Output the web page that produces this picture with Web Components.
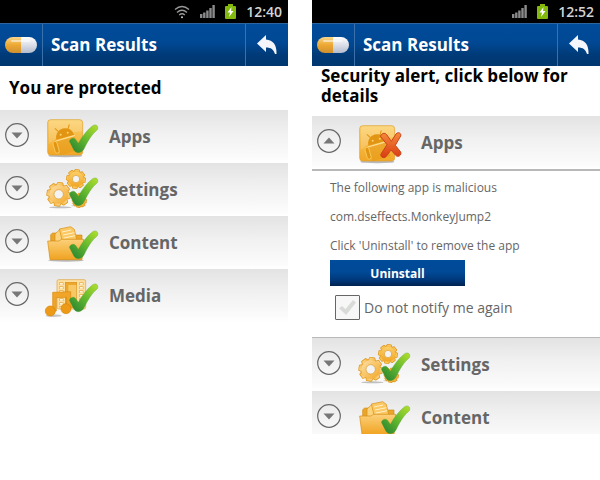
<!DOCTYPE html>
<html lang="en">
<head>
<meta charset="utf-8">
<meta name="viewport" content="width=device-width, initial-scale=1">
<title>Scan Results</title>
<style>
  body {
    margin: 0;
    background: #fff;
    color: #666;
    font-family: "Open Sans", "Noto Sans", sans-serif;
  }
  main {
    display: grid;
    grid-template-columns: 1fr 1fr;
    gap: 24px;
    align-items: start;
  }
  p {
    margin: 0;
    font-size: 12px;
    line-height: 29px;
  }
</style>
</head>
<body>
<main>
  <phone-screen time="12:40" wifi>
    <span slot="message">You are protected</span>
    <scan-row icon="apps" state="ok">Apps</scan-row>
    <scan-row icon="settings" state="ok">Settings</scan-row>
    <scan-row icon="content" state="ok">Content</scan-row>
    <scan-row icon="media" state="ok">Media</scan-row>
  </phone-screen>
  <phone-screen time="12:52" alert>
    <span slot="message">Security alert, click below for details</span>
    <scan-row icon="apps" state="bad" open>
      Apps
      <div slot="details">
        <p>The following app is malicious</p>
        <p>com.dseffects.MonkeyJump2</p>
        <p>Click 'Uninstall' to remove the app</p>
        <action-button>Uninstall</action-button>
        <tick-box>Do not notify me again</tick-box>
      </div>
    </scan-row>
    <scan-row icon="settings" state="ok">Settings</scan-row>
    <scan-row icon="content" state="ok" cut>Content</scan-row>
  </phone-screen>
</main>

<script>
const gear = (cx, cy, r, hole, fill) => {
  let teeth = '';
  for (let i = 0; i < 8; i++) {
    teeth += `<path d="M${-r * 0.3} ${-r * 0.7}L${-r * 0.2} ${-r}H${r * 0.2}L${r * 0.3} ${-r * 0.7}Z" transform="rotate(${i * 45 + 8})"/>`;
  }
  return `<g transform="translate(${cx} ${cy})" stroke-linejoin="round">
    <g fill="${fill}" stroke="#dc9418" stroke-width="5">${teeth}<circle r="${r * 0.8}"/></g>
    <g fill="${fill}" stroke="#f8bf55" stroke-width="1">${teeth}</g>
    <circle r="${r * 0.82}" fill="${fill}"/>
    <circle r="${hole}" fill="#f3f3f3" stroke="#d99a2c" stroke-width="2"/>
  </g>`;
};

const ICONS = {
  apps: `
    <ellipse cx="82" cy="131" rx="51" ry="5" fill="#777" opacity=".5"/>
    <rect x="29" y="23" width="105" height="106" rx="9" fill="url(#gold)" stroke="#e0a02e" stroke-width="2"/>
    <path d="M32 30q1-5 7-5h86q6 0 7 5v28Q75 60 32 96Z" fill="#fff" opacity=".18"/>
    <g transform="rotate(-16 80 70)" fill="#e29512">
      <path d="M52 76a28 27 0 0 1 56 0Z"/>
      <path d="M65 54l-7-11M95 54l7-11" stroke="#e29512" stroke-width="3" stroke-linecap="round"/>
      <path d="M52 82h56v42H52Z" opacity=".45"/>
      <path d="M51 79h58" stroke="#fde3a0" stroke-width="3"/>
      <circle cx="69" cy="65" r="3" fill="#fbd46e"/><circle cx="91" cy="65" r="3" fill="#fbd46e"/>
    </g>
    <rect x="48" y="88" width="12" height="36" rx="6" transform="rotate(-16 54 105)" fill="#e29512" stroke="#fbd46e" stroke-width="2"/>`,
  settings: `
    <ellipse cx="67" cy="127" rx="34" ry="3" fill="#777" opacity=".45"/>
    <ellipse cx="122" cy="122" rx="22" ry="3" fill="#777" opacity=".3"/>
    ${gear(124, 106, 20, 7, '#f5b33a')}
    ${gear(114, 42, 27, 11, 'url(#gold)')}
    ${gear(62, 88, 34, 14, 'url(#pale)')}`,
  content: `
    <ellipse cx="84" cy="127" rx="54" ry="4" fill="#777" opacity=".5"/>
    <g stroke="#d48c13" stroke-width="2" stroke-linejoin="round">
      <path d="M38 72V50l6-5h24l5 6h59v60H38Z" fill="#e9a62b"/>
      <path d="M51 48l15-14 28 2 17 42H51Z" fill="#fbd47d"/>
      <path d="M64 33l34-7 11 8 10 44H75Z" fill="#fbc862"/>
      <path d="M72 42l27-6M75 51l34-7M77 60l35-7" fill="none" stroke="#fff0c8" stroke-width="3"/>
      <path d="M29 69h34l7-5h67l-5 61H36Z" fill="url(#folder)"/>
    </g>`,
  media: `
    <ellipse cx="47" cy="134" rx="24" ry="4" fill="#777" opacity=".4"/>
    <rect x="57" y="26" width="86" height="88" rx="5" fill="#fde0a0" stroke="#dda13c" stroke-width="2"/>
    <rect x="82" y="34" width="34" height="76" fill="#eca82c" stroke="#d9901c" stroke-width="2"/>
    <path d="M91 42h24v60H91Z" fill="#f8c766"/>
    <path d="M70 34v76M130 34v76" stroke="#e3ab4c" stroke-width="13" stroke-dasharray="8 4"/>
    <path d="M70 36v74M130 36v74" stroke="#fff4d5" stroke-width="9" stroke-dasharray="5 7"/>
    <path d="M44 64l54-2v50H86V79l-31 1v40H44Z" fill="#f0a428" stroke="#d98b10" stroke-width="2"/>
    <circle cx="37" cy="120" r="15" fill="#ec9a17" stroke="#d78408" stroke-width="2"/>
    <circle cx="84" cy="113" r="15" fill="#ec9a17" stroke="#d78408" stroke-width="2"/>`
};

const MARKS = {
  ok: `<path d="M94 88c3-11 16-12 20-4l7 10c12-22 26-40 43-53 9-6 19 0 14 12-18 15-29 35-40 58-9 15-25 14-31 2Z" fill="url(#tick)" stroke="#4f9b2c"/>`,
  bad: `<path d="M92 56c0-9 12-14 18-6l14 20 14-22c7-8 17-2 14 6l-16 28 16 20c4 9-8 18-15 10l-14-16-15 20c-8 7-18 0-15-8l18-28Z" fill="url(#cross)" stroke="#c9441a" stroke-width="3"/>`
};

const DEFS = `
  <defs>
    <linearGradient id="gold" x2="0" y2="1"><stop stop-color="#fbcf68"/><stop offset="1" stop-color="#f2a625"/></linearGradient>
    <linearGradient id="pale" x2="1" y2="1"><stop stop-color="#fde1a8"/><stop offset="1" stop-color="#f3a827"/></linearGradient>
    <linearGradient id="folder" x2="0" y2="1"><stop stop-color="#fcd07a"/><stop offset="1" stop-color="#f0a320"/></linearGradient>
    <linearGradient id="tick" x1="1" x2="0" y2="1"><stop stop-color="#b4e02c"/><stop offset=".5" stop-color="#5fb62f"/><stop offset="1" stop-color="#227c31"/></linearGradient>
    <linearGradient id="cross" x2="0" y2="1"><stop stop-color="#f58a3c"/><stop offset="1" stop-color="#d93c12"/></linearGradient>
  </defs>`;

class StatusBar extends HTMLElement {
  constructor() {
    super();
    this.attachShadow({ mode: 'open' });
  }

  connectedCallback() {
    const wifi = this.hasAttribute('wifi') ? `
      <svg width="16" height="14" viewBox="0 0 16 14" fill="none" stroke="#999" stroke-width="1.4">
        <path d="M1 4.5Q8-1.5 15 4.5M3 7.5Q8 3 13 7.5M5.2 10Q8 7.5 10.8 10"/>
        <circle cx="8" cy="12.3" r="1" fill="#ccc" stroke="none"/>
      </svg>` : '';
    this.shadowRoot.innerHTML = `
      <style>
        :host {
          display: flex;
          align-items: center;
          justify-content: flex-end;
          gap: 10px;
          height: 23px;
          padding-right: 6px;
          background: #000;
          color: #d4d4d4;
          font-size: 14px;
          font-weight: 600;
        }
      </style>
      ${wifi}
      <svg width="15" height="14" viewBox="0 0 15 14" fill="#8b8b8b">
        <path d="M0 9h2.4v4H0zM3.1 7.5h2.4V13H3.1zM6.2 5.5h2.4V13H6.2zM9.3 3h2.4v10H9.3zM12.4 0h2.4v13h-2.4z"/>
      </svg>
      <svg width="11" height="15" viewBox="0 0 11 15">
        <path d="M3 0h5v2h2q1 0 1 1v11q0 1-1 1H1q-1 0-1-1V3q0-1 1-1h2Z" fill="#83b80e"/>
        <path d="M6.5 3L2.5 8.5H5L4 13L8.5 7H6Z" fill="#fff"/>
      </svg>
      <time>${this.getAttribute('time')}</time>
    `;
  }
}

class TitleBar extends HTMLElement {
  constructor() {
    super();
    this.attachShadow({ mode: 'open' });
    this.shadowRoot.innerHTML = `
      <style>
        :host {
          display: grid;
          grid-template-columns: 43px 1fr 43px;
          align-items: stretch;
          height: 43px;
          box-sizing: border-box;
          border-top: 1px solid #2f659f;
          background: linear-gradient(#004b9b, #004893 45%, #003a77 75%, #00376f);
          color: #fff;
        }
        .logo, button {
          display: grid;
          place-items: center;
          border: 0 solid #3b70ab;
        }
        .logo { border-right-width: 1px; }
        h1 {
          margin: 0;
          padding-left: 8px;
          font-size: 17px;
          line-height: 42px;
          white-space: nowrap;
        }
        button {
          padding: 0;
          border-left-width: 1px;
          background: none;
          cursor: pointer;
        }
      </style>
      <div class="logo">
        <svg width="32" height="16" viewBox="0 0 32 16">
          <defs>
            <linearGradient id="o" x2="0" y2="1"><stop stop-color="#f8d68c"/><stop offset=".5" stop-color="#eda832"/><stop offset="1" stop-color="#d09030"/></linearGradient>
            <linearGradient id="w" x2="0" y2="1"><stop stop-color="#fff"/><stop offset=".5" stop-color="#dcdfe8"/><stop offset="1" stop-color="#b4bccd"/></linearGradient>
          </defs>
          <path d="M16 0H8a8 8 0 0 0 0 16h8Z" fill="url(#o)"/>
          <path d="M16 0h8a8 8 0 0 1 0 16h-8Z" fill="url(#w)"/>
          <path d="M7 4h17" stroke="#fff" stroke-width="2" stroke-linecap="round" opacity=".5"/>
        </svg>
      </div>
      <h1><slot></slot></h1>
      <button type="button" aria-label="Back">
        <svg width="20" height="20" viewBox="0 0 20 20" fill="#f4f6fb">
          <path d="M0 8.5L9 0V4.500C16 5 20 10 19.5 19H18C16.5 14.5 14 12.5 9 12.5V17Z"/>
        </svg>
      </button>
    `;
  }
}

class PhoneScreen extends HTMLElement {
  constructor() {
    super();
    this.attachShadow({ mode: 'open' });
  }

  connectedCallback() {
    this.shadowRoot.innerHTML = `
      <style>
        :host {
          display: block;
          min-width: 0;
        }
        h2 {
          margin: 0;
          padding: 0 9px;
          color: #000;
          font-size: 17px;
          line-height: 44px;
        }
        :host([alert]) h2 {
          padding-bottom: 10px;
          line-height: 20px;
        }
      </style>
      <status-bar time="${this.getAttribute('time')}" ${this.hasAttribute('wifi') ? 'wifi' : ''}></status-bar>
      <title-bar>Scan Results</title-bar>
      <h2><slot name="message"></slot></h2>
      <slot></slot>
    `;
  }
}

class ScanRow extends HTMLElement {
  constructor() {
    super();
    this.attachShadow({ mode: 'open' });
  }

  connectedCallback() {
    this.shadowRoot.innerHTML = `
      <style>
        :host {
          display: block;
        }
        :host([cut]) {
          max-height: 43px;
          overflow: hidden;
        }
        button {
          display: grid;
          grid-template-columns: 33px 71px 1fr;
          align-items: center;
          width: 100%;
          height: 53px;
          padding: 0 0 0 5px;
          border: 0;
          background: linear-gradient(#e3e3e4, #f1f1f1 45%, #fbfbfb 90%, #fff);
          color: #666;
          font: bold 17px "Open Sans", "Noto Sans", sans-serif;
          text-align: left;
          cursor: pointer;
        }
        .arrow {
          padding-bottom: 4px;
        }
        .details {
          display: none;
          padding: 2px 18px 17px;
          border: 0 solid #b8b8b8;
          border-width: 2px 0 1px;
        }
        :host([open]) .arrow path {
          transform: scaleY(-1);
          transform-origin: 12px 12px;
        }
        :host([open]) .details {
          display: block;
        }
      </style>
      <button type="button">
        <svg class="arrow" width="24" height="24" viewBox="0 0 24 24">
          <circle cx="12" cy="12" r="11.3" fill="none" stroke="#666" stroke-width="1.2"/>
          <path d="M6.5 9.5h11L12 15.5Z" fill="#777"/>
        </svg>
        <svg width="66" height="50" viewBox="0 0 198 150">
          ${DEFS}
          ${ICONS[this.getAttribute('icon')]}
          ${MARKS[this.getAttribute('state')]}
        </svg>
        <span><slot></slot></span>
      </button>
      <div class="details"><slot name="details"></slot></div>
    `;

    this.button = this.shadowRoot.querySelector('button');
    this.button.setAttribute('aria-expanded', this.hasAttribute('open'));
    this.button.addEventListener('click', () => {
      // only rows with something to tell can be opened
      if (!this.querySelector('[slot="details"]')) return;
      this.toggleAttribute('open');
      this.button.setAttribute('aria-expanded', this.hasAttribute('open'));
    });
  }
}

class ActionButton extends HTMLElement {
  constructor() {
    super();
    this.attachShadow({ mode: 'open' });
    this.shadowRoot.innerHTML = `
      <style>
        :host { display: block; }
        button {
          display: block;
          width: 135px;
          height: 26px;
          padding: 0;
          border: 0;
          background: linear-gradient(#004b9a, #004a97 45%, #003676 80%, #00234f);
          color: #fff;
          font: bold 12px "Open Sans", "Noto Sans", sans-serif;
          cursor: pointer;
        }
      </style>
      <button type="button"><slot></slot></button>
    `;
  }
}

class TickBox extends HTMLElement {
  constructor() {
    super();
    this.attachShadow({ mode: 'open' });
    this.shadowRoot.innerHTML = `
      <style>
        :host {
          display: block;
          padding: 9px 0 0 5px;
        }
        label {
          display: flex;
          align-items: center;
          gap: 4px;
          font-size: 14px;
          line-height: 25px;
        }
        input {
          appearance: none;
          display: grid;
          place-items: center;
          flex: none;
          box-sizing: border-box;
          width: 25px;
          height: 25px;
          margin: 0;
          border: 1px solid #666;
          border-radius: 1px;
          background: #f7f7f7;
        }
        input::before {
          content: "";
          width: 17px;
          height: 15px;
          background: #d8dbd8;
          clip-path: polygon(0 55%, 18% 40%, 38% 62%, 82% 0, 100% 16%, 42% 100%);
        }
        input:checked::before { background: #4f9b2c; }
      </style>
      <label><input type="checkbox"><span><slot></slot></span></label>
    `;
  }
}

customElements.define('status-bar', StatusBar);
customElements.define('title-bar', TitleBar);
customElements.define('scan-row', ScanRow);
customElements.define('action-button', ActionButton);
customElements.define('tick-box', TickBox);
customElements.define('phone-screen', PhoneScreen);
</script>
</body>
</html>
